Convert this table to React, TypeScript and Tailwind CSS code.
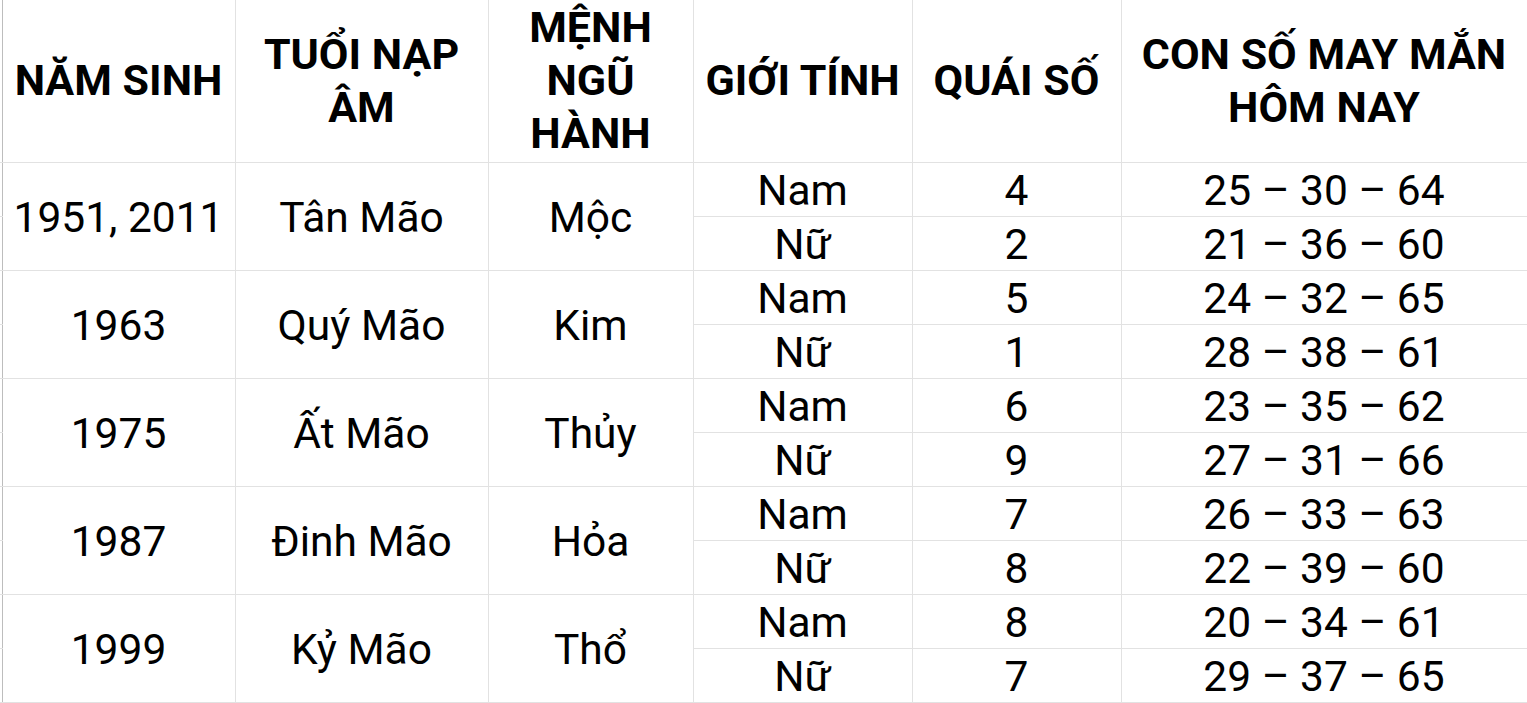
const rows = [
  { year: '1951, 2011', tuoi: 'Tân Mão', menh: 'Mộc', nam: ['4', '25 – 30 – 64'], nu: ['2', '21 – 36 – 60'] },
  { year: '1963', tuoi: 'Quý Mão', menh: 'Kim', nam: ['5', '24 – 32 – 65'], nu: ['1', '28 – 38 – 61'] },
  { year: '1975', tuoi: 'Ất Mão', menh: 'Thủy', nam: ['6', '23 – 35 – 62'], nu: ['9', '27 – 31 – 66'] },
  { year: '1987', tuoi: 'Đinh Mão', menh: 'Hỏa', nam: ['7', '26 – 33 – 63'], nu: ['8', '22 – 39 – 60'] },
  { year: '1999', tuoi: 'Kỷ Mão', menh: 'Thổ', nam: ['8', '20 – 34 – 61'], nu: ['7', '29 – 37 – 65'] },
];

const headers = ['NĂM SINH', 'TUỔI NẠP ÂM', 'MỆNH NGŨ HÀNH', 'GIỚI TÍNH', 'QUÁI SỐ', 'CON SỐ MAY MẮN HÔM NAY'];

export default function App() {
  const cell = 'border border-[#e2e2e2] text-center align-middle px-1 pt-[3px] pb-0';
  const spacer = 'border-b border-[#e2e2e2] p-0';

  return (
    <div className="w-[1527px] h-[703px] overflow-hidden bg-white text-black font-['Roboto',sans-serif]">
      <table className="table-fixed border-collapse w-[1527px]">
        <colgroup>
          <col className="w-[2px]" />
          <col className="w-[233px]" />
          <col className="w-[253px]" />
          <col className="w-[205px]" />
          <col className="w-[219px]" />
          <col className="w-[209px]" />
          <col className="w-[406px]" />
        </colgroup>
        <thead>
          <tr className="h-[162px]">
            <th className={spacer}></th>
            {headers.map((h, i) => (
              <th
                key={h}
                className={`border-b border-r border-[#e2e2e2] text-center align-middle px-0 text-[43px] leading-[53px] font-bold ${
                  i === 0 ? 'border-l border-l-[#bdbdbd]' : ''
                }`}
              >
                {h}
              </th>
            ))}
          </tr>
        </thead>
        <tbody className="text-[42.5px] leading-[48px]">
          {rows.map((r) => (
            <>
              <tr key={r.year + 'a'} className="h-[54px]">
                <td className={spacer}></td>
                <td rowSpan={2} className={`${cell} border-l-[#bdbdbd]`}>
                  {r.year}
                </td>
                <td rowSpan={2} className={cell}>
                  {r.tuoi}
                </td>
                <td rowSpan={2} className={cell}>
                  {r.menh}
                </td>
                <td className={cell}>Nam</td>
                <td className={cell}>{r.nam[0]}</td>
                <td className={cell}>{r.nam[1]}</td>
              </tr>
              <tr key={r.year + 'b'} className="h-[54px]">
                <td className={spacer}></td>
                <td className={cell}>Nữ</td>
                <td className={cell}>{r.nu[0]}</td>
                <td className={cell}>{r.nu[1]}</td>
              </tr>
            </>
          ))}
        </tbody>
      </table>
    </div>
  );
}
